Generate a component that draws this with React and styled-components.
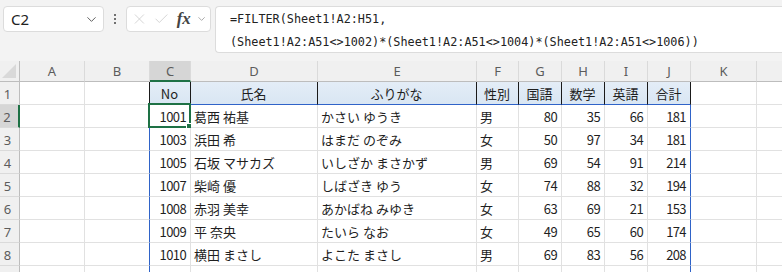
import React from 'react'
import styled, { createGlobalStyle } from 'styled-components'
import { ChevronDown, X, Check } from 'lucide-react'

const GlobalStyle = createGlobalStyle`
body {
    margin: 0;
    background: #ffffff;
    font-family: "Noto Sans CJK JP", "Noto Sans", sans-serif;
}
`;

const Window = styled.div`
width: 782px;
height: 272px;
overflow: hidden;
background: #ffffff;
`;

const Toolbar = styled.div`
display: flex;
align-items: flex-start;
height: 61px;
box-sizing: border-box;
padding: 6px 0 0 3px;
background: #f3f3f3;
`;

const NameBox = styled.div`
display: flex;
align-items: center;
justify-content: space-between;
width: 101px;
height: 26px;
box-sizing: border-box;
padding: 0 4px 0 7px;
background: #fff;
border: 1px solid #dcdcdc;
border-radius: 4px;
font-family: "Noto Sans", "Open Sans", sans-serif;
font-size: 15px;
color: #222;
`;

const Dots = styled.div`
display: flex;
flex-direction: column;
justify-content: center;
gap: 2px;
width: 22px;
height: 26px;
align-items: center;
span {
    width: 2px;
    height: 2px;
    background: #444;
    border-radius: 1px;
}
`;

const FxBox = styled.div`
display: flex;
align-items: center;
gap: 5px;
width: 85px;
height: 26px;
box-sizing: border-box;
padding: 0 3px 0 4px;
background: #fff;
border: 1px solid #dcdcdc;
border-radius: 4px;
color: #c8c8c8;
`;

const Fx = styled.span`
font-family: "Liberation Serif", serif;
font-style: italic;
font-weight: bold;
font-size: 17px;
color: #444;
margin-left: 2px;
`;

const FormulaBox = styled.div`
margin-left: 4px;
flex: 1;
height: 47px;
box-sizing: border-box;
padding: 0 0 0 14px;
background: #fff;
border: 1px solid #dcdcdc;
border-right: none;
border-radius: 4px 0 0 4px;
font-family: "DejaVu Sans Mono", "Liberation Mono", monospace;
font-size: 11.8px;
color: #222;
`;

const FormulaLine = styled.div`
height: 23px;
line-height: 23px;
white-space: pre;
&:first-child {
    margin-top: 1px;
}
`;

const Row = styled.div`
display: flex;
height: ${p => p.$h || 23}px;
`;

const ColHead = styled.div`
flex: none;
width: ${p => p.$w}px;
box-sizing: border-box;
display: flex;
align-items: center;
justify-content: center;
background: ${p => (p.$active ? '#d6d6d6' : '#f0f0f0')};
border-right: 1px solid #dadada;
border-bottom: ${p => (p.$active ? '2px solid #1e7145' : '1px solid #bdbdbd')};
font-family: "Noto Sans", "Open Sans", sans-serif;
font-size: 13px;
color: #5c5c5c;
`;

const Corner = styled(ColHead)`
position: relative;
border-right: 1px solid #bdbdbd;
&::after {
    content: '';
    position: absolute;
    right: 3px;
    bottom: 3px;
    border-left: 14px solid transparent;
    border-bottom: 14px solid #d9d9d9;
}
`;

const RowHead = styled.div`
flex: none;
width: 20px;
box-sizing: border-box;
display: flex;
align-items: center;
justify-content: center;
padding-right: 4px;
padding-top: 1px;
background: ${p => (p.$active ? '#d6d6d6' : '#f0f0f0')};
border-right: ${p => (p.$active ? '2px solid #1e7145' : '1px solid #bdbdbd')};
border-bottom: 1px solid #dadada;
font-family: "Noto Sans", "Open Sans", sans-serif;
font-size: 13px;
color: #5c5c5c;
`;

const Cell = styled.div`
flex: none;
position: relative;
width: ${p => p.$w}px;
box-sizing: border-box;
display: flex;
align-items: center;
justify-content: ${p => p.$align};
padding: 1px 4px 0 3px;
background: ${p => (p.$head ? 'linear-gradient(#e4edf7, #d9e6f3)' : '#fff')};
border-right: 1px solid ${p => p.$right || '#e1e1e1'};
border-bottom: 1px solid ${p => p.$bottom || '#e1e1e1'};
font-size: 13px;
letter-spacing: ${p => (p.$num ? '-0.6px' : '0')};
color: #1f1f1f;
white-space: nowrap;
`;

const Selection = styled.div`
position: absolute;
left: -2px;
top: -2px;
right: -1px;
bottom: -1px;
border: 2px solid #1e7145;
pointer-events: none;
&::after {
    content: '';
    position: absolute;
    right: -4px;
    bottom: -4px;
    width: 5px;
    height: 5px;
    background: #1e7145;
    border: 1px solid #fff;
}
`;

const widths = [65, 65, 41, 127, 159, 42, 43, 43, 43, 43, 66, 90];
const letters = ['A', 'B', 'C', 'D', 'E', 'F', 'G', 'H', 'I', 'J', 'K', 'L'];
const heads = ['No', '氏名', 'ふりがな', '性別', '国語', '数学', '英語', '合計'];

const data = [
    [1001, '葛西 祐基', 'かさい ゆうき', '男', 80, 35, 66, 181],
    [1003, '浜田 希', 'はまだ のぞみ', '女', 50, 97, 34, 181],
    [1005, '石坂 マサカズ', 'いしざか まさかず', '男', 69, 54, 91, 214],
    [1007, '柴崎 優', 'しばざき ゆう', '女', 74, 88, 32, 194],
    [1008, '赤羽 美幸', 'あかばね みゆき', '女', 63, 69, 21, 153],
    [1009, '平 奈央', 'たいら なお', '女', 49, 65, 60, 174],
    [1010, '横田 まさし', 'よこた まさし', '男', 69, 83, 56, 208],
    [1011, '樹村 健太', 'きむら けんた', '男', 72, 58, 77, 207],
];

const SPILL = '#2f63c8';
const BLACK = '#1a1a1a';

function HeaderRow() {
    return (
        <Row>
            <RowHead>1</RowHead>
            {widths.map((w, c) => {
                const inTable = c >= 2 && c <= 9;
                const right = c >= 1 && c <= 9 ? BLACK : undefined;
                return (
                    <Cell key={c} $w={w} $align="center" $head={inTable}
                        $right={right} $bottom={inTable ? SPILL : undefined}>
                        {inTable ? heads[c - 2] : ''}
                    </Cell>
                );
            })}
        </Row>
    );
}

function DataRow({ n, values }) {
    return (
        <Row>
            <RowHead $active={n === 2}>{n}</RowHead>
            {widths.map((w, c) => {
                const inTable = c >= 2 && c <= 9;
                const v = inTable ? values[c - 2] : '';
                const num = typeof v === 'number';
                const right = c === 1 || c === 9 ? SPILL : undefined;
                return (
                    <Cell key={c} $w={w} $align={num ? 'flex-end' : 'flex-start'} $num={num} $right={right}>
                        {v}
                        {n === 2 && c === 2 && <Selection />}
                    </Cell>
                );
            })}
        </Row>
    );
}

export default function App() {
    return (
        <Window>
            <GlobalStyle />
            <Toolbar>
                <NameBox>
                    C2
                    <ChevronDown size={15} color="#555" strokeWidth={1.5} />
                </NameBox>
                <Dots><span /><span /><span /></Dots>
                <FxBox>
                    <X size={18} strokeWidth={1.1} />
                    <Check size={18} strokeWidth={1.1} />
                    <Fx>fx</Fx>
                    <ChevronDown size={12} color="#888" strokeWidth={1.5} />
                </FxBox>
                <FormulaBox>
                    <FormulaLine>=FILTER(Sheet1!A2:H51,</FormulaLine>
                    <FormulaLine>(Sheet1!A2:A51&lt;&gt;1002)*(Sheet1!A2:A51&lt;&gt;1004)*(Sheet1!A2:A51&lt;&gt;1006))</FormulaLine>
                </FormulaBox>
            </Toolbar>
            <Row $h={21}>
                <Corner $w={20} />
                {widths.map((w, c) => (
                    <ColHead key={c} $w={w} $active={c === 2}>{c < 11 ? letters[c] : ''}</ColHead>
                ))}
            </Row>
            <HeaderRow />
            {data.map((values, i) => (
                <DataRow key={i} n={i + 2} values={values} />
            ))}
        </Window>
    );
}
